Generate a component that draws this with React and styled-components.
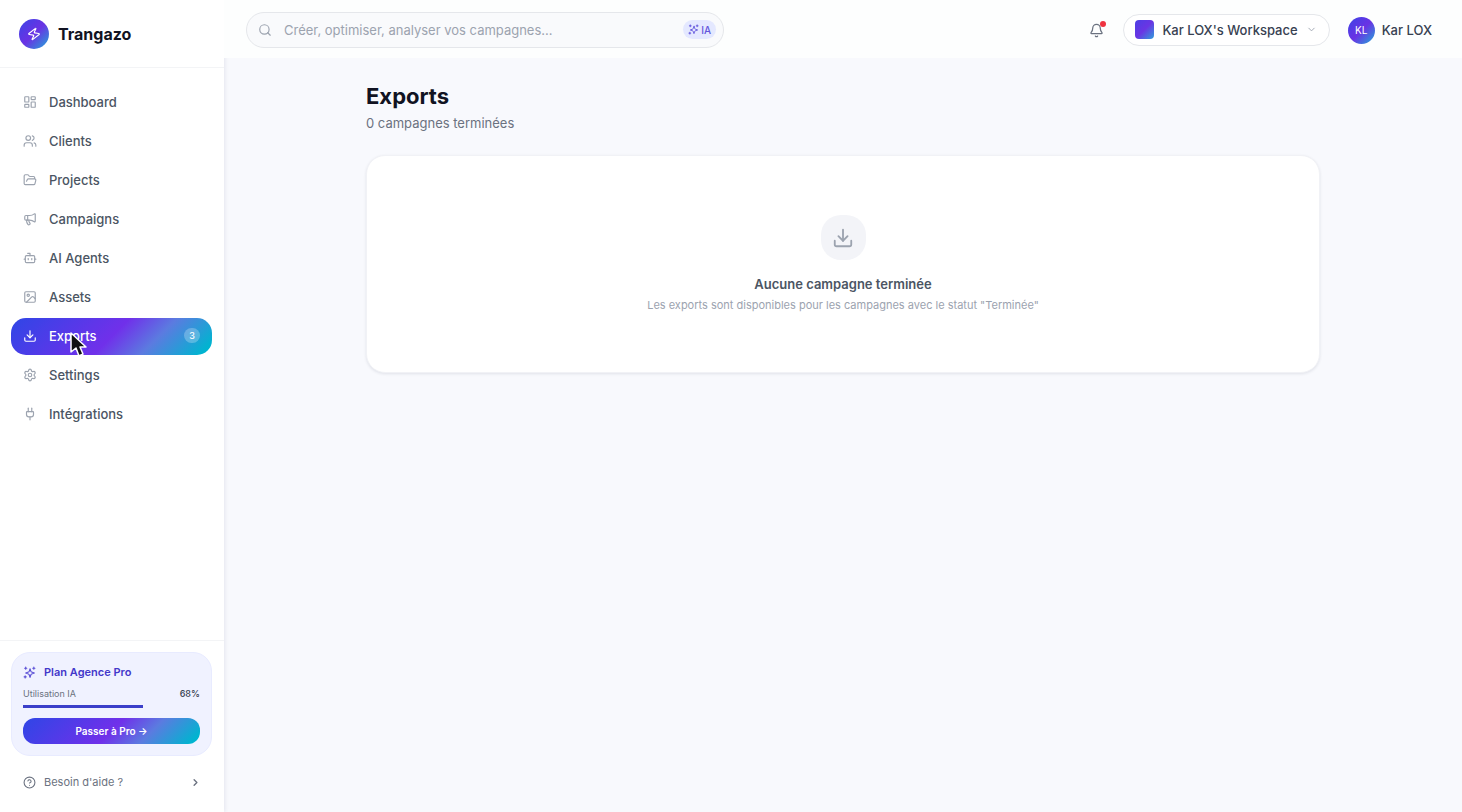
import styled, { createGlobalStyle, ThemeProvider } from 'styled-components';
import {
    Bell,
    Bot,
    ChevronDown,
    ChevronRight,
    CircleHelp,
    Download,
    FolderOpen,
    Image,
    LayoutDashboard,
    Megaphone,
    Plug,
    Search,
    Settings,
    Users,
    Zap,
} from 'lucide-react';

const theme = {
    basics: {
        white: '#ffffff',
        page: '#f8f9fd',
        border: '#e5e7eb',
        divider: '#f3f4f6',
    },
    text: {
        strong: '#111322',
        main: '#4b5563',
        dark: '#374151',
        muted: '#6b7280',
        light: '#9ca3af',
    },
    brand: {
        indigo: '#4338ca',
        soft: '#f0f2ff',
        gradient: 'linear-gradient(135deg, #2f46e6 0%, #7030ea 50%, #5b7be0 70%, #00b4d0 95%)',
        round: 'linear-gradient(135deg, #3b45e6 0%, #6a32e4 50%, #22a9d8 100%)',
    },
};

const GlobalStyle = createGlobalStyle`
    *{
        box-sizing: border-box;
    }
    body{
        background: ${theme.basics.page};
        font-family: Inter, "Liberation Sans", sans-serif;
        margin: 0;
    }
    h1, p, ul{
        margin: 0;
        padding: 0;
    }
    button, input{
        font-family: inherit;
    }
    a{
        color: inherit;
        text-decoration: none;
    }
    svg{
        flex-shrink: 0;
    }
`

const Layout = styled.div`
    display: flex;
    min-height: 100vh;
`

const Sidebar = styled.aside`
    background: ${({ theme }) => theme.basics.white};
    box-shadow: 1px 0 4px rgba(30, 35, 90, 0.09);
    display: flex;
    flex-direction: column;
    flex-shrink: 0;
    width: 224px;
`

const Brand = styled.a`
    align-items: center;
    border-bottom: 1px solid ${({ theme }) => theme.basics.divider};
    color: ${({ theme }) => theme.text.strong};
    display: flex;
    font-size: 16px;
    font-weight: 700;
    gap: 9px;
    height: 68px;
    padding: 0 19px;
`

const BrandMark = styled.span`
    align-items: center;
    background: ${({ theme }) => theme.brand.round};
    border-radius: 50%;
    color: ${({ theme }) => theme.basics.white};
    display: flex;
    height: 30px;
    justify-content: center;
    width: 30px;
    svg{
        transform: rotate(8deg);
    }
`

const NavList = styled.ul`
    display: flex;
    flex: 1;
    flex-direction: column;
    gap: 2px;
    list-style: none;
    padding: 16px 12px 16px 11px;
`

const NavLink = styled.a`
    align-items: center;
    background: ${({ theme, $active }) => $active ? theme.brand.gradient : 'transparent'};
    border-radius: 15px;
    color: ${({ theme, $active }) => $active ? theme.basics.white : theme.text.main};
    display: flex;
    font-size: 13px;
    font-weight: 500;
    gap: 12px;
    height: 37px;
    padding: 0 12px 2px;
    svg{
        color: ${({ theme, $active }) => $active ? theme.basics.white : theme.text.light};
    }
`

const NavCount = styled.span`
    background: rgba(255, 255, 255, 0.25);
    border-radius: 8px;
    font-size: 9px;
    line-height: 15px;
    margin-left: auto;
    padding: 0 5px;
`

const SidebarFooter = styled.div`
    border-top: 1px solid ${({ theme }) => theme.basics.divider};
    padding: 11px 12px 22px 11px;
`

const PlanCard = styled.section`
    background: ${({ theme }) => theme.brand.soft};
    border: 1px solid #e8ebff;
    border-radius: 19px;
    display: flex;
    flex-direction: column;
    padding: 11px;
`

const PlanTitle = styled.div`
    align-items: center;
    color: ${({ theme }) => theme.brand.indigo};
    display: flex;
    font-size: 11px;
    font-weight: 600;
    gap: 8px;
    line-height: 16px;
    svg{
        color: #5b50d6;
    }
`

const Usage = styled.div`
    color: ${({ theme }) => theme.text.muted};
    display: flex;
    font-size: 9px;
    justify-content: space-between;
    line-height: 14px;
    margin: 7px 0 4px;
    strong{
        color: ${({ theme }) => theme.text.dark};
        font-weight: 500;
    }
`

const UsageBar = styled.div`
    height: 4px;
    div{
        background: #3b3fc9;
        height: 3px;
    }
`

const UpgradeButton = styled.button`
    background: ${({ theme }) => theme.brand.gradient};
    border: 0;
    border-radius: 12px;
    color: ${({ theme }) => theme.basics.white};
    font-size: 10px;
    font-weight: 600;
    height: 26px;
    margin-top: 9px;
`

const HelpLink = styled.a`
    align-items: center;
    color: ${({ theme }) => theme.text.muted};
    display: flex;
    font-size: 11px;
    gap: 8px;
    line-height: 16px;
    margin-top: 18px;
    padding: 0 11px 0 12px;
    svg:last-child{
        margin-left: auto;
    }
`

const Content = styled.div`
    display: flex;
    flex: 1;
    flex-direction: column;
    min-width: 0;
`

const TopBar = styled.header`
    align-items: center;
    background: #fdfefe;
    display: flex;
    height: 58px;
    justify-content: space-between;
    padding: 2px 30px 0 22px;
`

const SearchBox = styled.label`
    align-items: center;
    background: #f9fafc;
    border: 1px solid ${({ theme }) => theme.basics.border};
    border-radius: 18px;
    color: ${({ theme }) => theme.text.light};
    display: flex;
    flex: 0 1 478px;
    gap: 12px;
    height: 36px;
    padding: 0 7px 1px 11px;
    input{
        background: transparent;
        border: 0;
        color: ${({ theme }) => theme.text.dark};
        flex: 1;
        font-size: 13px;
        min-width: 0;
        outline: 0;
        padding: 0;
        &::placeholder{
            color: ${({ theme }) => theme.text.light};
        }
    }
`

const AiTag = styled.span`
    align-items: center;
    background: #e4e8ff;
    border-radius: 10px;
    color: #6355dc;
    display: flex;
    font-size: 10px;
    font-weight: 500;
    gap: 2px;
    height: 19px;
    padding: 0 5px;
`

const TopActions = styled.div`
    align-items: center;
    display: flex;
`

const BellButton = styled.button`
    background: none;
    border: 0;
    color: ${({ theme }) => theme.text.muted};
    display: flex;
    margin-right: 19px;
    padding: 0;
    position: relative;
    &::after{
        background: #ef3340;
        border-radius: 50%;
        content: '';
        height: 6px;
        position: absolute;
        right: -2px;
        top: -2px;
        width: 6px;
    }
`

const WorkspaceButton = styled.button`
    align-items: center;
    background: ${({ theme }) => theme.basics.white};
    border: 1px solid ${({ theme }) => theme.basics.border};
    border-radius: 16px;
    color: ${({ theme }) => theme.text.dark};
    display: flex;
    font-size: 13px;
    font-weight: 500;
    height: 32px;
    margin-right: 18px;
    padding: 0 12px 1px 11px;
    svg{
        color: ${({ theme }) => theme.text.light};
        margin-left: 8px;
    }
`

const WorkspaceMark = styled.span`
    background: linear-gradient(135deg, #4b3fe4 0%, #6a35e4 50%, #2f9edb 100%);
    border-radius: 4px;
    height: 19px;
    margin-right: 8px;
    width: 19px;
`

const Profile = styled.button`
    align-items: center;
    background: none;
    border: 0;
    color: ${({ theme }) => theme.text.dark};
    display: flex;
    font-size: 13px;
    font-weight: 500;
    gap: 7px;
    padding: 0;
`

const Avatar = styled.span`
    align-items: center;
    background: ${({ theme }) => theme.brand.round};
    border-radius: 50%;
    color: ${({ theme }) => theme.basics.white};
    display: flex;
    font-size: 10px;
    font-weight: 400;
    height: 27px;
    justify-content: center;
    width: 27px;
`

const Main = styled.main`
    margin: 0 auto;
    max-width: 1002px;
    padding: 24px;
    width: 100%;
`

const PageTitle = styled.h1`
    color: ${({ theme }) => theme.text.strong};
    font-size: 22px;
    font-weight: 700;
    line-height: 28px;
`

const PageSubtitle = styled.p`
    color: ${({ theme }) => theme.text.muted};
    font-size: 13px;
    line-height: 20px;
    margin-top: 3px;
`

const EmptyCard = styled.section`
    align-items: center;
    background: ${({ theme }) => theme.basics.white};
    border: 1px solid #f1f2f6;
    border-radius: 19px;
    box-shadow: 0 1px 3px rgba(20, 25, 60, 0.1);
    display: flex;
    flex-direction: column;
    margin-top: 22px;
    padding: 59px 24px;
`

const EmptyIcon = styled.div`
    align-items: center;
    background: #f3f4f8;
    border-radius: 20px;
    color: ${({ theme }) => theme.text.light};
    display: flex;
    height: 45px;
    justify-content: center;
    width: 45px;
`

const EmptyTitle = styled.p`
    color: ${({ theme }) => theme.text.main};
    font-size: 13px;
    font-weight: 600;
    line-height: 20px;
    margin-top: 14px;
`

const EmptyText = styled.p`
    color: ${({ theme }) => theme.text.light};
    font-size: 11px;
    line-height: 16px;
    margin-top: 3px;
`

const Pointer = styled.svg`
    left: 68px;
    pointer-events: none;
    position: absolute;
    top: 331px;
`

const navItems = [
    { label: 'Dashboard', icon: LayoutDashboard },
    { label: 'Clients', icon: Users },
    { label: 'Projects', icon: FolderOpen },
    { label: 'Campaigns', icon: Megaphone },
    { label: 'AI Agents', icon: Bot },
    { label: 'Assets', icon: Image },
    { label: 'Exports', icon: Download, active: true, count: 3 },
    { label: 'Settings', icon: Settings },
    { label: 'Intégrations', icon: Plug },
];

function SparklesIcon({ size }){
    return(
        <svg width={size} height={size} viewBox='0 0 24 24' fill='none' stroke='currentColor' strokeWidth='2' strokeLinecap='round' strokeLinejoin='round'>
            <path d='M13 5l-1.6 4.9a2 2 0 0 1-1.3 1.3L5 13l5.1 1.8a2 2 0 0 1 1.3 1.3L13 21l1.6-4.9a2 2 0 0 1 1.3-1.3L21 13l-5.1-1.8a2 2 0 0 1-1.3-1.3z' />
            <path d='M5 2v4M3 4h4M20 2v4M18 4h4M4 18v4M2 20h4' />
        </svg>
    )
}

function SideMenu(){

    const usage = 68;

    return(
        <Sidebar>
            <Brand href='#'>
                <BrandMark><Zap size={14} /></BrandMark>
                Trangazo
            </Brand>
            <NavList>
                {navItems.map(({ label, icon: Icon, active, count }) => {
                    return(
                        <li key={label}>
                            <NavLink href='#' $active={active}>
                                <Icon size={14} strokeWidth={2} />
                                {label}
                                {count && <NavCount>{count}</NavCount>}
                            </NavLink>
                        </li>
                    )
                })}
            </NavList>
            <SidebarFooter>
                <PlanCard>
                    <PlanTitle><SparklesIcon size={13} />Plan Agence Pro</PlanTitle>
                    <Usage><span>Utilisation IA</span><strong>{usage}%</strong></Usage>
                    <UsageBar><div style={{ width: usage+'%' }} /></UsageBar>
                    <UpgradeButton>Passer à Pro →</UpgradeButton>
                </PlanCard>
                <HelpLink href='#'>
                    <CircleHelp size={13} />
                    Besoin d'aide ?
                    <ChevronRight size={11} strokeWidth={3} />
                </HelpLink>
            </SidebarFooter>
        </Sidebar>
    )
}

function Header(){
    return(
        <TopBar>
            <SearchBox>
                <Search size={14} />
                <input type='text' aria-label='Recherche' placeholder='Créer, optimiser, analyser vos campagnes...' />
                <AiTag><SparklesIcon size={11} />IA</AiTag>
            </SearchBox>
            <TopActions>
                <BellButton aria-label='Notifications'><Bell size={15} /></BellButton>
                <WorkspaceButton>
                    <WorkspaceMark />
                    Kar LOX's Workspace
                    <ChevronDown size={11} />
                </WorkspaceButton>
                <Profile><Avatar>KL</Avatar>Kar LOX</Profile>
            </TopActions>
        </TopBar>
    )
}

export default function App(){
    return(
        <ThemeProvider theme={theme}>
            <GlobalStyle />
            <Layout>
                <SideMenu />
                <Content>
                    <Header />
                    <Main>
                        <PageTitle>Exports</PageTitle>
                        <PageSubtitle>0 campagnes terminées</PageSubtitle>
                        <EmptyCard>
                            <EmptyIcon><Download size={22} strokeWidth={2} /></EmptyIcon>
                            <EmptyTitle>Aucune campagne terminée</EmptyTitle>
                            <EmptyText>Les exports sont disponibles pour les campagnes avec le statut "Terminée"</EmptyText>
                        </EmptyCard>
                    </Main>
                </Content>
            </Layout>
            <Pointer width='22' height='28' viewBox='0 0 22 28' aria-hidden='true'>
                <path d='M3 2v19l5-4 3 8 4-2-3-7h6z' fill='#111111' stroke='#ffffff' strokeWidth='1.5' strokeLinejoin='round' />
            </Pointer>
        </ThemeProvider>
    )
}
